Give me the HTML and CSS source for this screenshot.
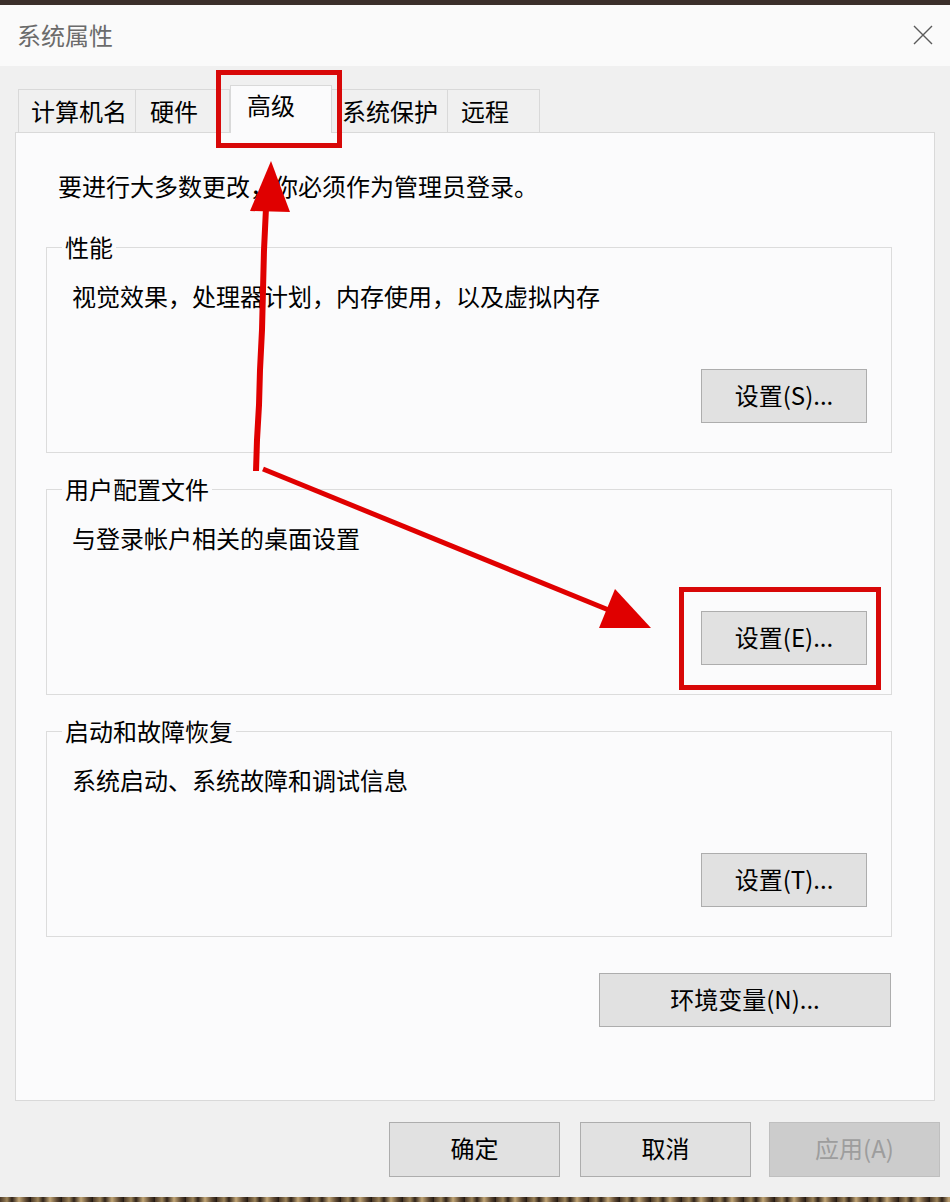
FILE: index.html
```html
<!DOCTYPE html>
<html lang="zh-CN">
<head>
    <meta charset="UTF-8">
    <meta name="viewport" content="width=device-width, initial-scale=1.0">
    <title>系统属性</title>
    <link rel="stylesheet" href="styles.css">
</head>
<body>

<div class="edge edge-top"></div>

<div class="titlebar">
    <span class="title">系统属性</span>
    <svg class="close" width="22" height="22" viewBox="0 0 22 22">
        <path d="M2 2 L20 20 M20 2 L2 20" stroke="#5a5a5a" stroke-width="1.4" fill="none"/>
    </svg>
</div>

<div class="window-body">
    <div class="tabs">
        <div class="tab tab-name">计算机名</div>
        <div class="tab tab-hw">硬件</div>
        <div class="tab tab-adv active">高级</div>
        <div class="tab tab-protect">系统保护</div>
        <div class="tab tab-remote">远程</div>
    </div>

    <div class="panel">
        <p class="notice">要进行大多数更改，你必须作为管理员登录。</p>

        <fieldset class="group">
            <legend>性能</legend>
            <p class="desc">视觉效果，处理器计划，内存使用，以及虚拟内存</p>
            <div class="actions"><button class="btn">设置(S)...</button></div>
        </fieldset>

        <fieldset class="group">
            <legend>用户配置文件</legend>
            <p class="desc">与登录帐户相关的桌面设置</p>
            <div class="actions"><button class="btn">设置(E)...</button></div>
        </fieldset>

        <fieldset class="group">
            <legend>启动和故障恢复</legend>
            <p class="desc">系统启动、系统故障和调试信息</p>
            <div class="actions"><button class="btn">设置(T)...</button></div>
        </fieldset>

        <div class="env-row"><button class="btn btn-wide">环境变量(N)...</button></div>
    </div>

    <div class="footer">
        <button class="btn btn-foot">确定</button>
        <button class="btn btn-foot">取消</button>
        <button class="btn btn-foot btn-apply" disabled>应用(A)</button>
    </div>
</div>

<div class="edge edge-bottom"></div>

<!-- red annotations drawn over the dialog -->
<svg class="annotations" width="950" height="1202" viewBox="0 0 950 1202">
    <rect x="218.5" y="72.5" width="121" height="73" fill="none" stroke="#d80808" stroke-width="5"/>
    <rect x="681.5" y="589.5" width="197" height="98" fill="none" stroke="#d80808" stroke-width="5"/>
    <polyline points="256,471 257,440 259,405 260,370 262,330 263,290 264,250 266,208" fill="none" stroke="#e00000" stroke-width="6"/>
    <polygon points="271,161 250,211 290,212" fill="#e00000"/>
    <line x1="263" y1="469" x2="616" y2="613" stroke="#e00000" stroke-width="5"/>
    <polygon points="651,628 599,628 615,589" fill="#e00000"/>
</svg>

</body>
</html>
```

FILE: styles.css
```css
* {
    box-sizing: border-box;
    margin: 0;
    padding: 0;
}
body {
    width: 950px;
    height: 1202px;
    overflow: hidden;
    font-family: "Noto Sans CJK SC", "Microsoft YaHei", sans-serif;
    font-size: 24px;
    color: #000;
    background: #f0f0f0;
    position: relative;
}
.edge {
    height: 5px;
}
.edge-top {
    background: #3b2f2a;
}
.edge-bottom {
    background: repeating-linear-gradient(90deg, #4a3828 0, #9c8358 7px, #2f2219 12px, #c2a676 19px, #5b4631 26px, #1f1610 31px);
}
.titlebar {
    height: 61px;
    background: #fafafa;
    display: flex;
    align-items: center;
    justify-content: space-between;
    padding: 0 16px 2px 17px;
}
.title {
    color: #6b6b6b;
    line-height: 32px;
}
.window-body {
    height: 1131px;
    background: #f0f0f0;
}
/* Tabs */
.tabs {
    display: flex;
    align-items: flex-end;
    padding: 19px 0 0 18px;
    margin-bottom: -1px;
}
.tab {
    height: 43px;
    margin-bottom: 1px;
    line-height: 41px;
    padding-left: 12px;
    border-top: 1px solid #d9d9d9;
    border-right: 1px solid #d9d9d9;
    background: #f0f0f0;
    white-space: nowrap;
}
.tab-name {
    width: 118px;
    border-left: 1px solid #d9d9d9;
}
.tab-hw {
    width: 94px;
    padding-left: 14px;
}
.tab-adv {
    width: 102px;
}
.tab-protect {
    width: 116px;
    padding-left: 10px;
}
.tab-remote {
    width: 92px;
    padding-left: 13px;
}
.tab.active {
    position: relative;
    z-index: 1;
    height: 48px;
    margin-bottom: 0;
    padding: 3px 0 0 16px;
    line-height: 32px;
    background: #fbfbfc;
    border-left: 1px solid #d9d9d9;
}
/* Panel */
.panel {
    margin: 0 15px;
    border: 1px solid #d9d9d9;
    background: #fbfbfc;
    padding: 37px 42px 73px 30px;
}
.notice {
    line-height: 32px;
    margin-left: 12px;
    margin-bottom: 29px;
}
.group {
    border: 1px solid #dcdcdc;
    padding: 17px 24px 29px 25px;
    margin-bottom: 20px;
    min-width: 0;
}
.group legend {
    line-height: 32px;
    padding: 0 3px;
    margin-left: -10px;
}
.desc {
    line-height: 32px;
}
.actions {
    display: flex;
    justify-content: flex-end;
    margin-top: 57px;
}
.env-row {
    display: flex;
    justify-content: flex-end;
    margin-top: 36px;
    padding-right: 1px;
}
/* Buttons */
.btn {
    font-family: inherit;
    font-size: 24px;
    color: #000;
    width: 166px;
    height: 54px;
    padding-bottom: 3px;
    background: #e1e1e1;
    border: 1px solid #adadad;
    line-height: 32px;
}
.btn-wide {
    width: 292px;
}
.footer {
    display: flex;
    justify-content: flex-end;
    gap: 20px;
    margin-top: 21px;
    padding-right: 10px;
}
.btn-foot {
    width: 171px;
    height: 55px;
}
.btn-apply {
    margin-left: -2px;
}
.btn:disabled {
    background: #cccccc;
    border-color: #bfbfbf;
    color: #9d9d9d;
}
.annotations {
    position: absolute;
    top: 0;
    left: 0;
    pointer-events: none;
}
```
